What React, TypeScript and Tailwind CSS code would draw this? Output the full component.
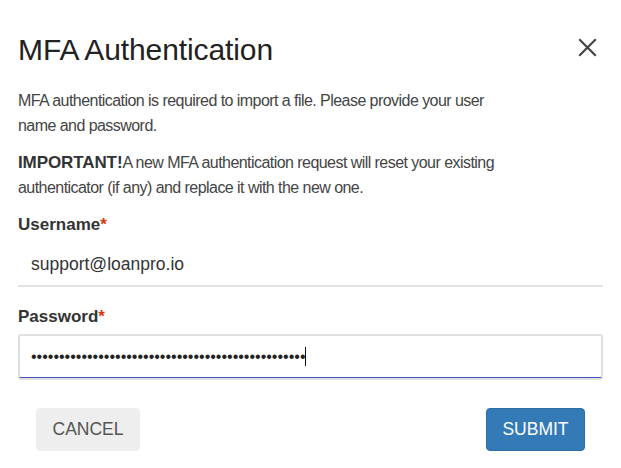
const CloseIcon = () => (
  <svg width="19" height="19" viewBox="0 0 19 19" className="text-[#444]">
    <path d="M2 2 L17 17 M17 2 L2 17" stroke="currentColor" strokeWidth="2.2" strokeLinecap="square" />
  </svg>
);

const App = () => {
  const dots = "•".repeat(49);

  return (
    <div
      className="w-[621px] h-[468px] bg-white px-[18px] text-[#444]"
      style={{ fontFamily: '"Liberation Sans", Arial, sans-serif' }}
    >
      <div className="flex items-center justify-between pt-[28px] h-[72px]">
        <h1 className="text-[30px] leading-[40px] tracking-[-0.1px] text-[#222]">MFA Authentication</h1>
        <button className="mr-[6px] mt-[-6px]">
          <CloseIcon />
        </button>
      </div>

      <p className="mt-[16px] text-[16px] leading-[25px] tracking-[-0.55px]">
        MFA authentication is required to import a file. Please provide your user
        <br />
        name and password.
      </p>
      <p className="mt-[12px] text-[16px] leading-[25px] tracking-[-0.55px]">
        <span className="font-bold text-[17px] tracking-[-0.1px] text-[#333]">IMPORTANT!</span>A new MFA authentication request will reset your existing
        <br />
        authenticator (if any) and replace it with the new one.
      </p>

      <label className="block mt-[13px] text-[17px] leading-[24px] font-bold text-[#333]">
        Username<span className="text-[#d4380d]">*</span>
      </label>
      <div className="mt-[7px] h-[43px] flex items-center pl-[13px] border-b-2 border-[#e3e3e3] text-[17.5px] text-[#333]">
        support@loanpro.io
      </div>

      <label className="block mt-[18px] text-[17px] leading-[24px] font-bold text-[#333]">
        Password<span className="text-[#d4380d]">*</span>
      </label>
      <div className="mt-[5px] h-[44px] flex items-center pl-[11px] rounded-[3px] border-2 border-[#e0e0e0] border-b border-b-[#3f51b5] shadow-[0_2px_0_#e0e0e0]">
        <span className="text-[16px] leading-none text-[#222]">{dots}</span>
        <span className="w-px h-[19px] bg-[#111]" />
      </div>

      <div className="flex justify-between px-[18px] mt-[30px]">
        <button className="h-[43px] w-[104px] rounded-[4px] bg-[#eeeeee] text-[#555] text-[17.5px]">
          CANCEL
        </button>
        <button className="h-[43px] w-[99px] rounded-[4px] bg-[#337ab7] border border-[#2e6da4] text-white text-[17.5px]">
          SUBMIT
        </button>
      </div>
    </div>
  );
};

export default App;
